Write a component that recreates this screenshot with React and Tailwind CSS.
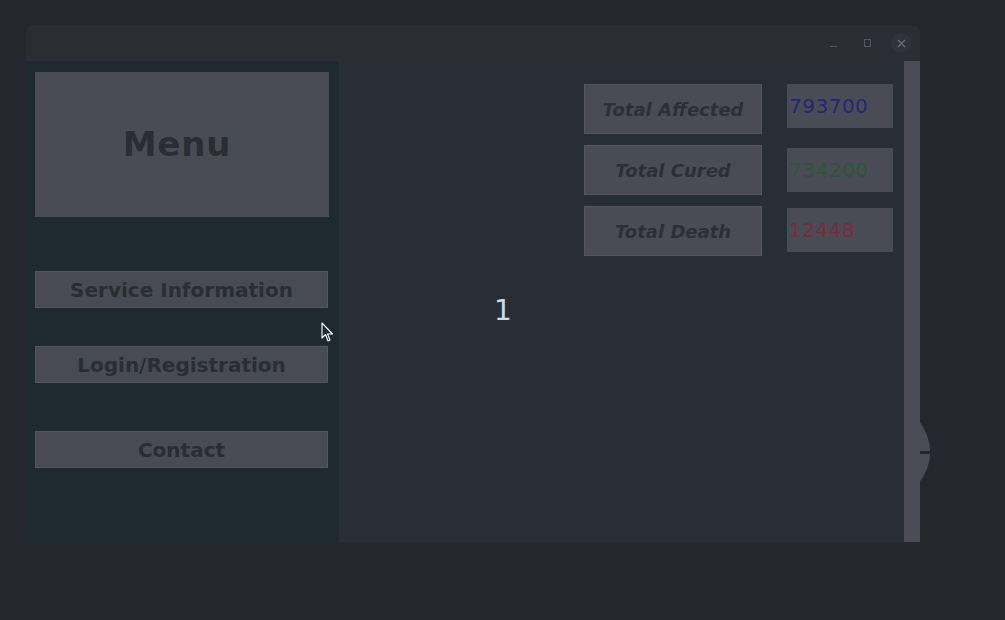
import React from "react";

const font = { fontFamily: '"DejaVu Sans", "Liberation Sans", sans-serif' };

const stats = [
  { label: "Total Affected", value: "793700", color: "text-[#25257a]", valueGap: "mt-0" },
  { label: "Total Cured", value: "734200", color: "text-[#2a5638]", valueGap: "mt-[3px]" },
  { label: "Total Death", value: "12448", color: "text-[#782c3b]", valueGap: "mt-[2px]" },
];

const MenuButton = ({ children, className }) => (
  <button className={`w-[293px] h-[37px] bg-[#484b54] border border-[#53565e] text-[20px] font-bold text-[#2a2d33] ${className}`}>
    {children}
  </button>
);

const App = () => {
  return (
    <div className="relative w-[1005px] h-[620px] bg-[#24282d] overflow-hidden" style={font}>
      {/* desktop widget peeking out behind the window */}
      <div className="absolute left-[834px] top-[404px] w-[96px] h-[96px] rounded-full bg-[#4a4d55]">
        <div className="absolute left-0 right-0 top-[47px] h-[3px] bg-[#24282d]" />
      </div>

      <div className="relative ml-[26px] mt-[25px] w-[894px] h-[517px] flex flex-col">
        {/* title bar */}
        <div className="h-[36px] bg-[#2b2d33] rounded-t-lg flex items-center justify-end pr-[9px] gap-[14px]">
          <span className="w-[20px] flex justify-center">
            <span className="block w-[7px] h-px bg-[#55585f] mt-[6px]" />
          </span>
          <span className="w-[20px] flex justify-center">
            <span className="block w-[7px] h-[8px] border border-[#55585f]" />
          </span>
          <span className="w-[20px] h-[20px] rounded-full bg-[#30333a] flex items-center justify-center">
            <svg width="9" height="9" viewBox="0 0 9 9">
              <path d="M1 1 L8 8 M8 1 L1 8" stroke="#6a6d74" strokeWidth="1.2" />
            </svg>
          </span>
        </div>

        {/* body */}
        <div className="flex flex-1">
          <div className="w-[313px] bg-[#1e2a2e] pt-[11px] pl-[9px] flex flex-col">
            <div className="w-[294px] h-[145px] bg-[#4a4c55] flex items-center justify-center pr-[10px]">
              <span className="text-[34px] font-bold text-[#2a2d33] tracking-wide">Menu</span>
            </div>
            <MenuButton className="mt-[54px]">Service Information</MenuButton>
            <MenuButton className="mt-[38px]">Login/Registration</MenuButton>
            <MenuButton className="mt-[48px]">Contact</MenuButton>
          </div>

          <div className="flex-1 bg-[#272e36] flex">
            <div className="w-[245px] pl-[155px] pt-[236px]">
              <span className="text-[28px] text-[#c9dce8] leading-none">1</span>
            </div>
            <div className="pt-[23px] flex flex-col gap-[11px]">
              {stats.map((s) => (
                <div key={s.label} className="flex items-start gap-[25px]">
                  <div className="w-[178px] h-[50px] bg-[#4a4c55] border border-[#53565e] flex items-center justify-center">
                    <span className="text-[18px] font-bold italic text-[#2d2f35]">{s.label}</span>
                  </div>
                  <div className={`w-[106px] h-[44px] bg-[#4a4c55] flex items-center pl-[2px] ${s.valueGap}`}>
                    <span className={`text-[20px] tracking-wide ${s.color}`}>{s.value}</span>
                  </div>
                </div>
              ))}
            </div>
          </div>

          <div className="w-[16px] bg-[#4a4d55]" />
        </div>
      </div>

      {/* mouse cursor */}
      <svg className="absolute left-[321px] top-[322px]" width="13" height="21" viewBox="0 0 13 21">
        <path d="M1 1 L1 16 L4.5 12.5 L7 19 L9 18 L6.5 12 L11.5 12 Z" fill="#1e2a2e" stroke="#ffffff" strokeWidth="1.1" strokeLinejoin="round" />
      </svg>
    </div>
  );
};

export default App;
